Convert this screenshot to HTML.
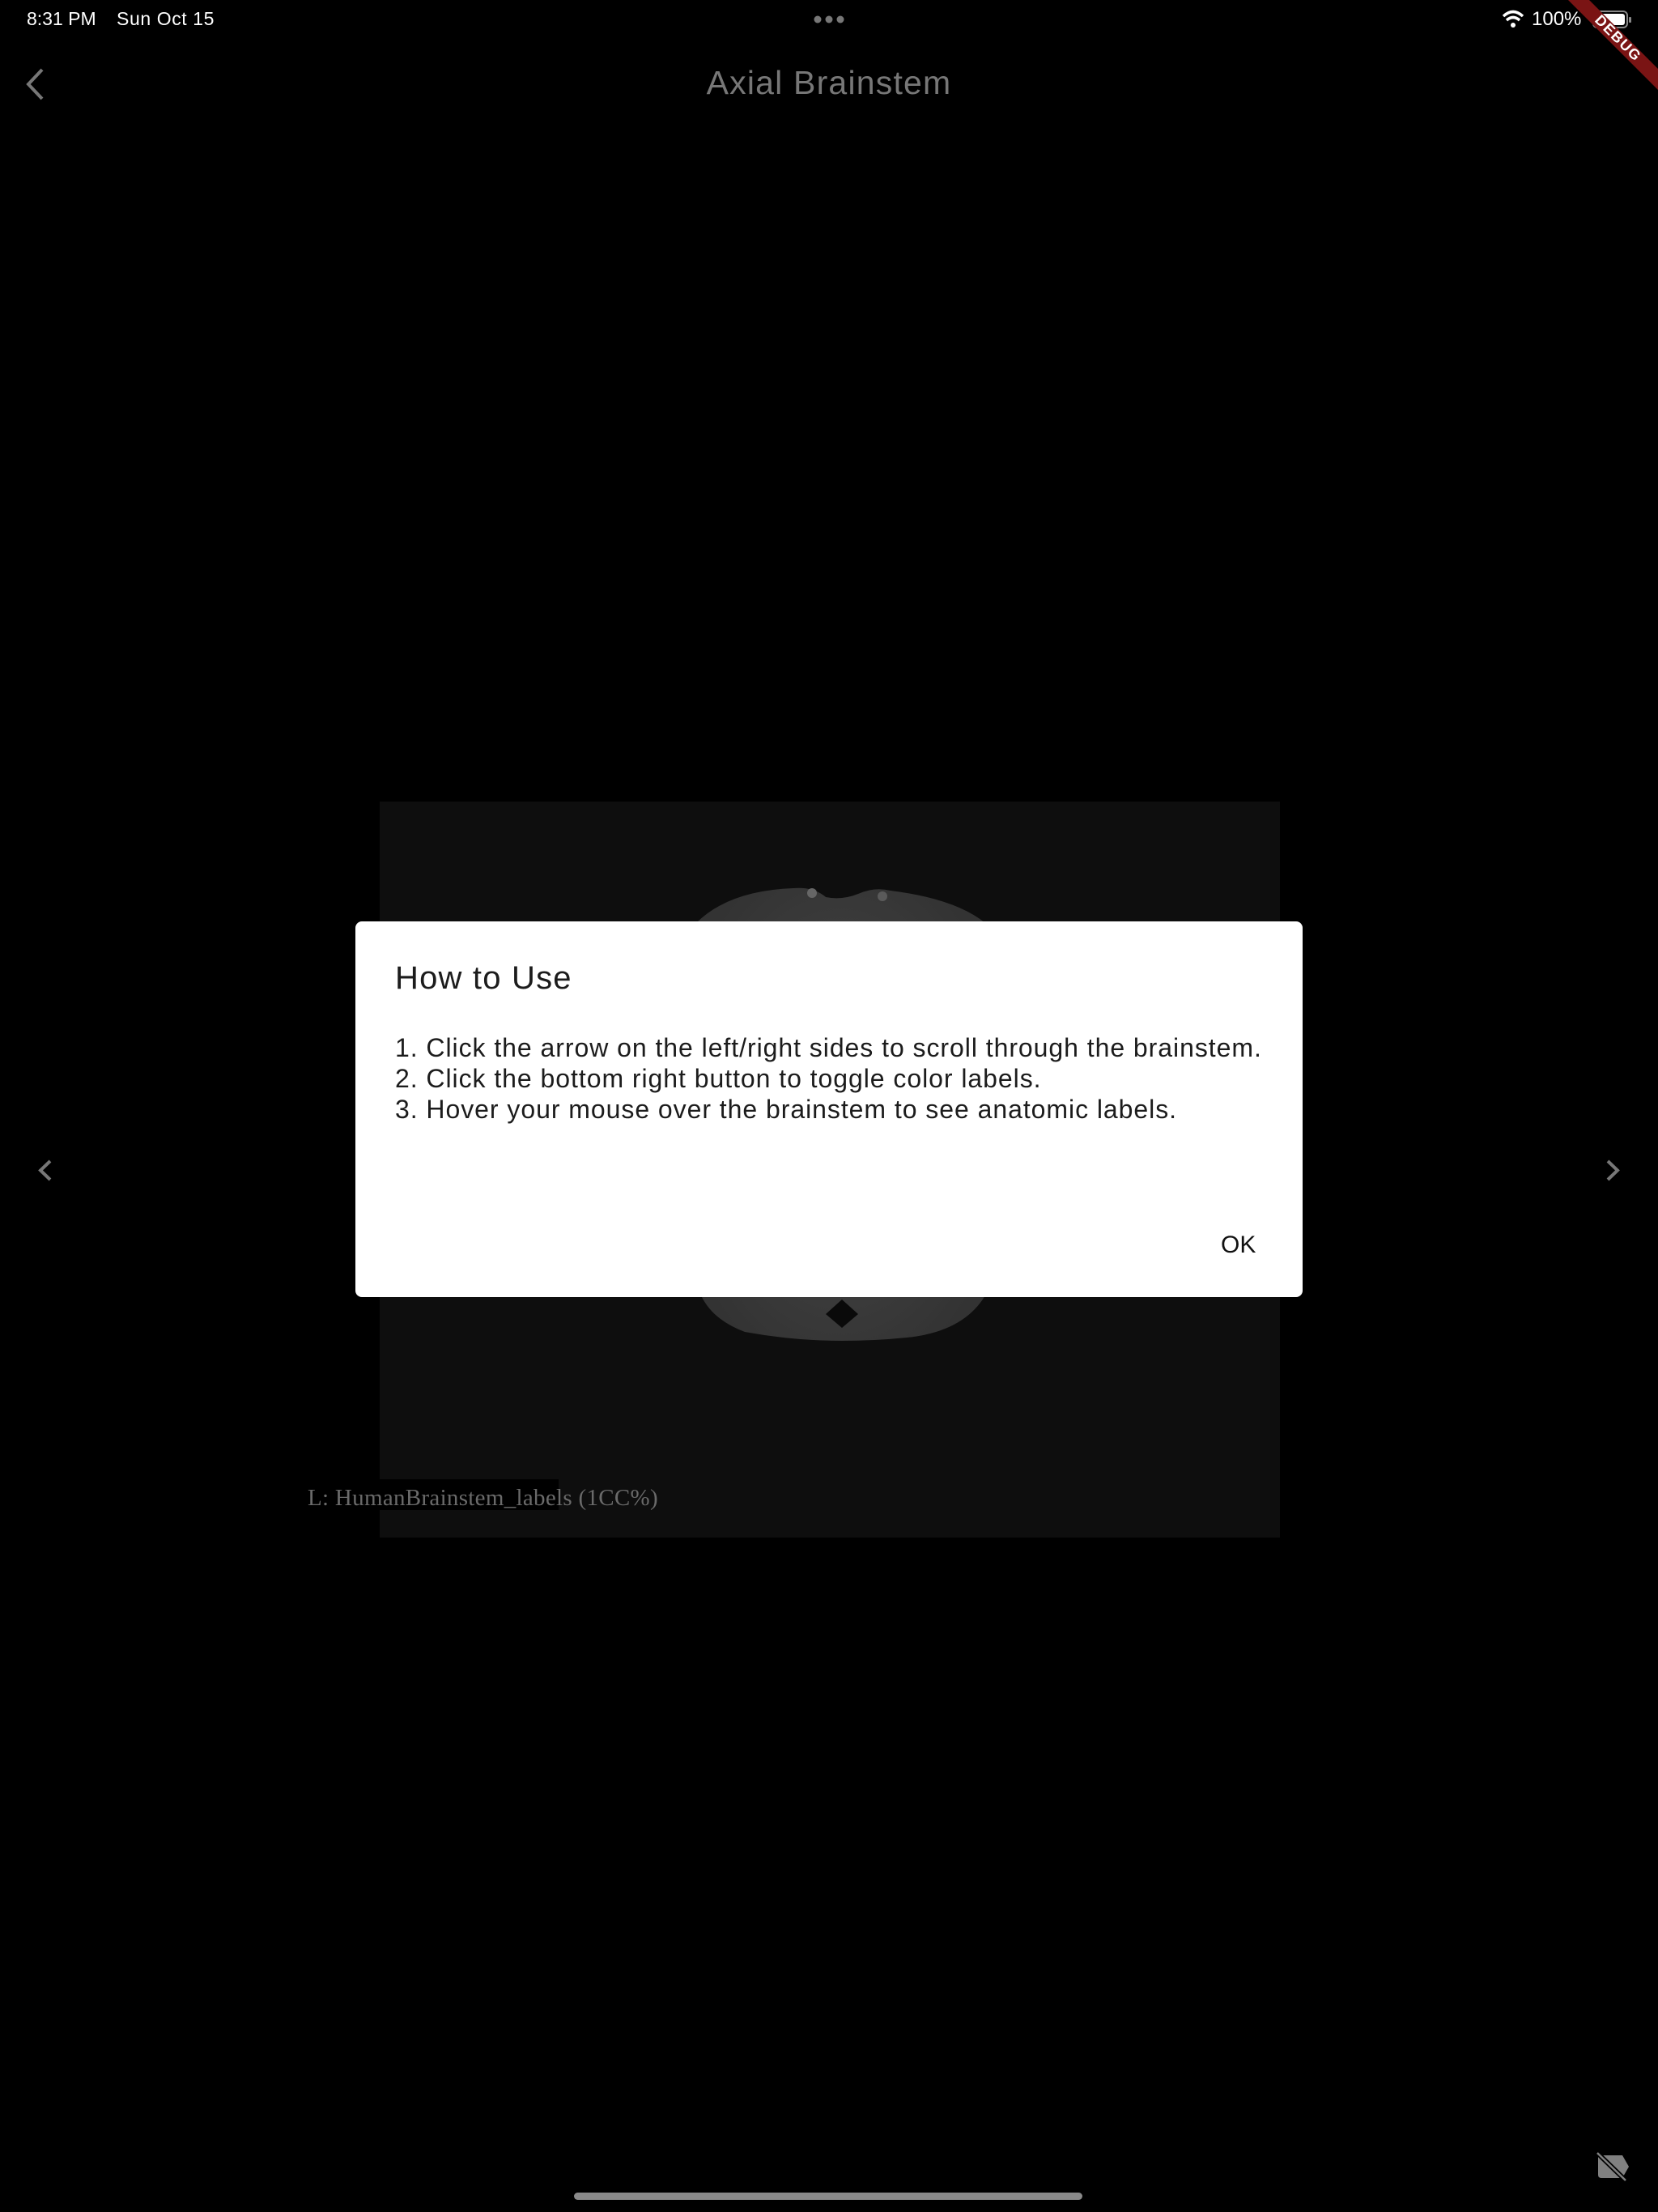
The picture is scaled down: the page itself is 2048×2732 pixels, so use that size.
<!DOCTYPE html>
<html><head><meta charset="utf-8"><style>
html,body{margin:0;padding:0;background:#000;}
body{width:2048px;height:2732px;position:relative;overflow:hidden;font-family:"Liberation Sans",sans-serif;}
.abs{position:absolute;white-space:nowrap;}
</style></head><body>
<!-- status bar -->
<div class="abs" style="left:33px;top:10px;font-size:23px;color:#fff;">8:31 PM</div>
<div class="abs" style="left:144px;top:10px;font-size:23px;color:#fff;letter-spacing:0.6px;">Sun Oct 15</div>
<svg class="abs" style="left:0;top:0" width="2048" height="140">
  <circle cx="1010" cy="24" r="4.5" fill="#777"/><circle cx="1024" cy="24" r="4.5" fill="#777"/><circle cx="1038" cy="24" r="4.5" fill="#777"/>
  <path d="M1857 20 Q1869 9 1881 20" stroke="#fff" stroke-width="3.5" fill="none"/>
  <path d="M1861 25 Q1869 18 1877 25" stroke="#fff" stroke-width="3.5" fill="none"/>
  <circle cx="1869" cy="31" r="3" fill="#fff"/>
  <rect x="1968" y="14" width="42" height="20" rx="5" fill="none" stroke="#888" stroke-width="2"/>
  <rect x="1971" y="17" width="36" height="14" rx="3" fill="#fff"/>
  <rect x="2012" y="21" width="3" height="7" rx="1" fill="#888"/>
  <path d="M52 86 L35 104 L52 122" stroke="#777" stroke-width="4" fill="none"/>
  <polygon points="1937,0 1963,0 2048,85 2048,111" fill="#7a1414"/>
  <text x="0" y="0" transform="translate(1998,48) rotate(45)" text-anchor="middle" dominant-baseline="middle" font-family="Liberation Sans" font-weight="bold" font-size="18" fill="#fff" letter-spacing="1.5">DEBUG</text>
</svg>
<div class="abs" style="left:1892px;top:10px;font-size:24px;color:#fff;">100%</div>
<div class="abs" style="left:0;width:2048px;top:79px;text-align:center;font-size:41px;letter-spacing:1.2px;color:#777;">Axial Brainstem</div>

<!-- image box -->
<div class="abs" style="left:469px;top:990px;width:1112px;height:909px;background:#0e0e0e;"></div>
<svg class="abs" style="left:0;top:0" width="2048" height="2000">
  <defs><radialGradient id="g" cx="0.5" cy="0.5" r="0.6"><stop offset="0" stop-color="#4a4a4a"/><stop offset="1" stop-color="#333"/></radialGradient></defs>
  <path d="M860 1140 Q900 1100 980 1097 Q1005 1095 1020 1108 Q1040 1112 1060 1104 Q1080 1095 1100 1100 Q1180 1110 1217 1140 L1217 1600 Q1190 1645 1120 1652 Q1080 1656 1040 1656 Q980 1656 920 1645 Q880 1630 866 1600 Z" fill="url(#g)"/>
  <circle cx="1003" cy="1103" r="6" fill="#666"/><circle cx="1090" cy="1107" r="6" fill="#5a5a5a"/>
  <path d="M1020 1623 L1040 1605 L1060 1623 L1040 1640 Z" fill="#0a0a0a"/>
  <rect x="468" y="1827" width="222" height="38" fill="#000"/>
  <path d="M62 1434 L50 1445.5 L62 1457" stroke="#777" stroke-width="4" fill="none"/>
  <path d="M1986 1434 L1998 1445.5 L1986 1457" stroke="#777" stroke-width="4" fill="none"/>
</svg>
<div class="abs" style="left:380px;top:1834px;font-family:'Liberation Serif',serif;font-size:29px;letter-spacing:0.3px;color:#6a6a6a;">L: HumanBrainstem_labels (1CC%)</div>

<!-- dialog -->
<div class="abs" style="left:439px;top:1138px;width:1170px;height:464px;background:#fff;border-radius:8px;"></div>
<div class="abs" style="left:488px;top:1186px;font-size:40px;letter-spacing:1.2px;color:#1c1c1c;">How to Use</div>
<div class="abs" style="left:488px;top:1275px;font-size:32px;letter-spacing:0.95px;line-height:38px;color:#1c1c1c;">1. Click the arrow on the left/right sides to scroll through the brainstem.<br>2. Click the bottom right button to toggle color labels.<br>3. Hover your mouse over the brainstem to see anatomic labels.</div>
<div class="abs" style="left:1508px;top:1521px;font-size:30px;color:#111;">OK</div>

<!-- bottom icon -->
<svg class="abs" style="left:1960px;top:2650px" width="70" height="50">
  <path d="M14 12 L44 12 L52 26 L44 40 L18 40 Q14 40 14 36 Z" fill="#808080"/>
  <path d="M13 9 L48 43" stroke="#000" stroke-width="6"/>
  <path d="M13 9 L48 43" stroke="#808080" stroke-width="2.5"/>
</svg>
<div class="abs" style="left:709px;top:2708px;width:628px;height:9px;border-radius:5px;background:#8a8a8a;"></div>
</body></html>
